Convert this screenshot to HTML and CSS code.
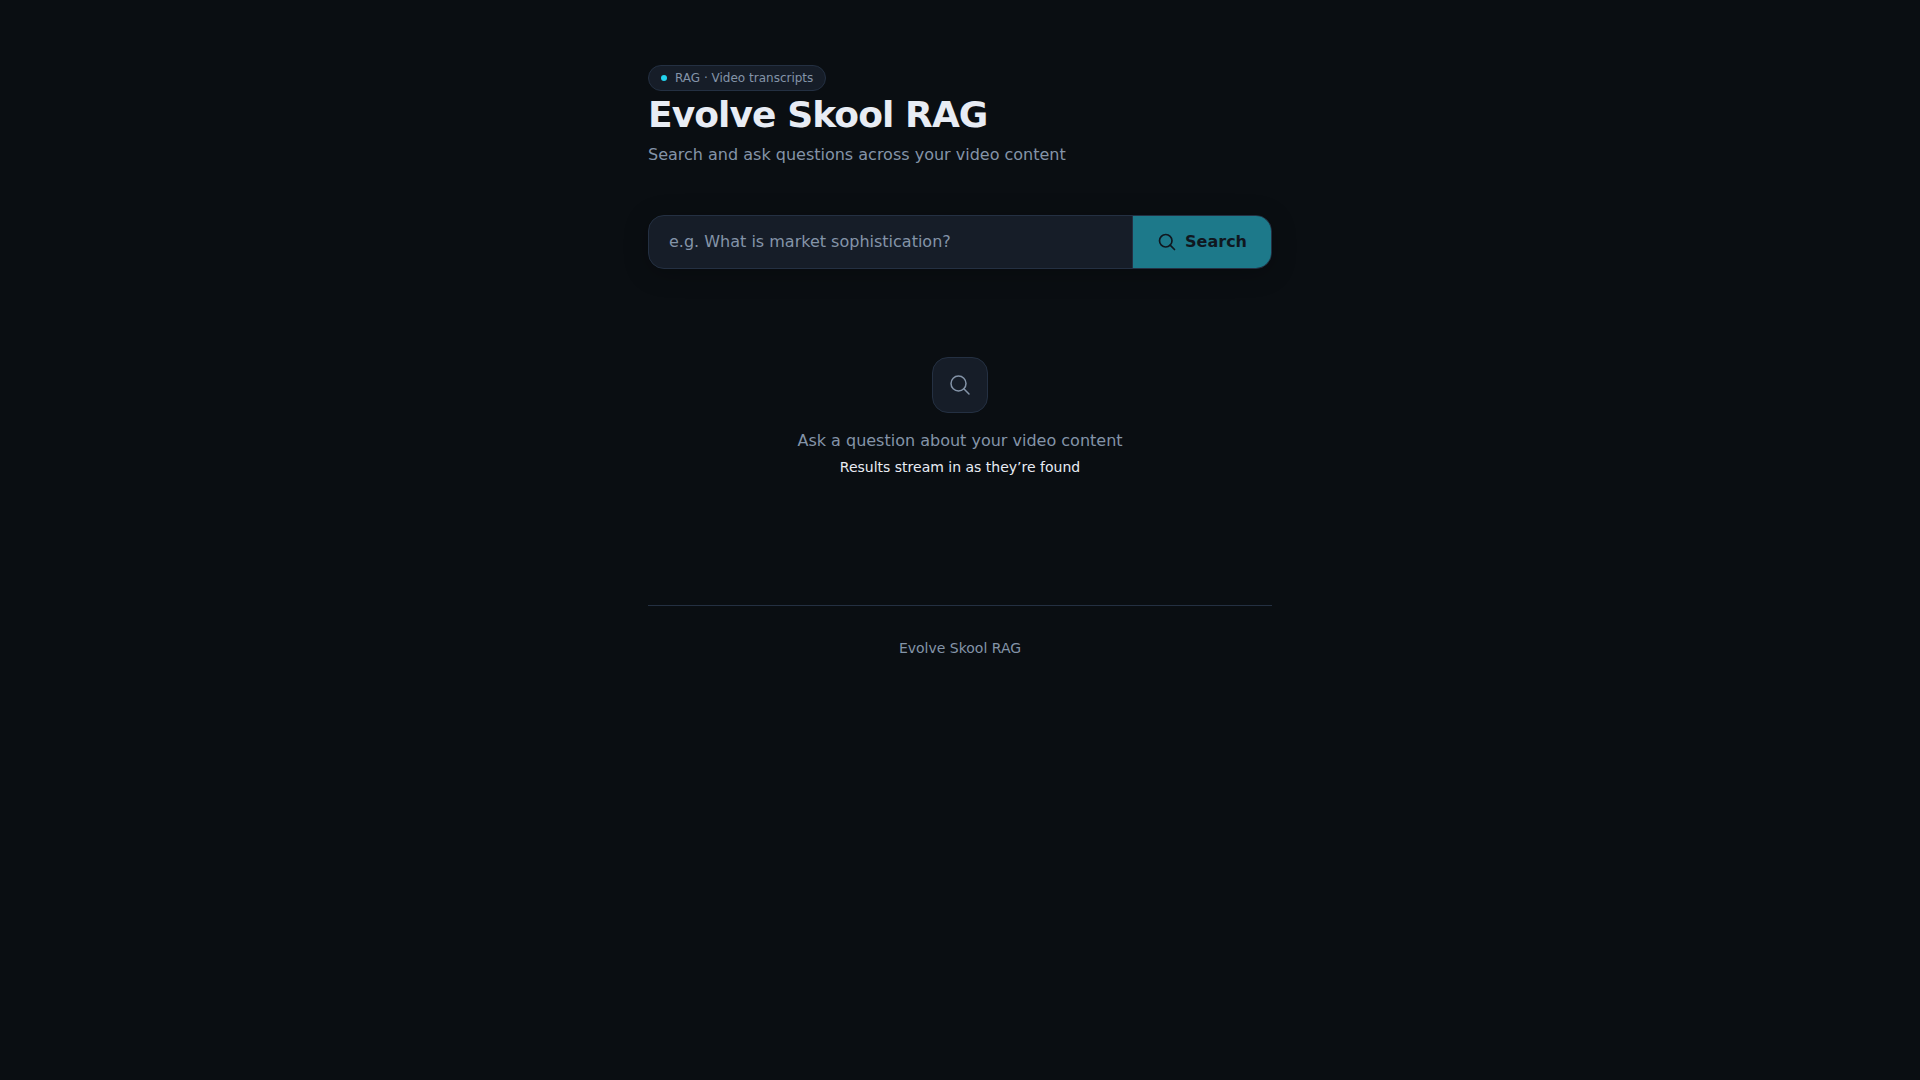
FILE: index.html
```html
<!DOCTYPE html>
<html lang="en">
<head>
    <meta charset="UTF-8">
    <meta name="viewport" content="width=device-width, initial-scale=1.0">
    <title>Evolve Skool RAG</title>
    <link rel="stylesheet" href="styles.css">
</head>
<body>
    <div class="container">
        <header class="header">
            <span class="badge"><span class="badge-dot"></span>RAG · Video transcripts</span>
            <h1>Evolve Skool RAG</h1>
            <p class="subtitle">Search and ask questions across your video content</p>
        </header>

        <main>
            <form class="search-form">
                <input type="text" id="query" class="search-input" aria-label="Question" placeholder="e.g. What is market sophistication?">
                <button type="submit" class="search-button" disabled>
                    <svg class="search-icon" viewBox="0 0 24 24" aria-hidden="true">
                        <circle cx="10.5" cy="10.5" r="7.5"/>
                        <path d="M21 21l-5.2-5.2"/>
                    </svg>
                    Search
                </button>
            </form>

            <section class="empty-state">
                <div class="empty-icon">
                    <svg viewBox="0 0 24 24" aria-hidden="true">
                        <circle cx="10.5" cy="10.5" r="7.5"/>
                        <path d="M21 21l-5.2-5.2"/>
                    </svg>
                </div>
                <p class="empty-title">Ask a question about your video content</p>
                <p class="empty-hint">Results stream in as they’re found</p>
            </section>
        </main>

        <footer class="footer">Evolve Skool RAG</footer>
    </div>
</body>
</html>
```

FILE: styles.css
```css
:root {
    --bg: #0a0e12;
    --surface: #161d28;
    --border: #243042;
    --text: #e8ecf4;
    --muted: #8494a8;
    --accent: #22d3ee;
}
* {
    box-sizing: border-box;
}
body {
    margin: 0;
    background-color: var(--bg);
    color: var(--text);
    font-family: "DejaVu Sans", sans-serif;
    font-size: 16px;
    line-height: 24px;
}
h1, p {
    margin: 0;
}
svg {
    fill: none;
    stroke: currentColor;
    stroke-width: 1.5;
    stroke-linecap: round;
    stroke-linejoin: round;
}
.container {
    max-width: 672px;
    margin: 0 auto;
    padding: 65px 24px;
}
.header {
    display: flex;
    flex-direction: column;
    align-items: flex-start;
    margin-bottom: 48px;
}
.badge {
    display: flex;
    align-items: center;
    gap: 8px;
    margin-bottom: 4px;
    padding: 4px 12px;
    border: 1px solid var(--border);
    border-radius: 999px;
    background-color: var(--surface);
    color: var(--muted);
    font-size: 12px;
    line-height: 16px;
}
.badge-dot {
    width: 6px;
    height: 6px;
    border-radius: 50%;
    background-color: var(--accent);
}
h1 {
    font-size: 36px;
    line-height: 40px;
    font-weight: 700;
    letter-spacing: -0.025em;
}
.subtitle {
    margin-top: 8px;
    color: var(--muted);
}
.search-form {
    display: flex;
    overflow: hidden;
    border: 1px solid var(--border);
    border-radius: 16px;
    background-color: var(--surface);
    box-shadow: 0 4px 24px rgba(0, 0, 0, 0.25);
}
.search-input {
    flex: 1;
    min-width: 0;
    padding: 14px 20px;
    border: none;
    outline: none;
    background: transparent;
    color: var(--text);
    font: inherit;
}
.search-input::placeholder {
    color: var(--muted);
    opacity: 1;
}
.search-button {
    display: flex;
    align-items: center;
    gap: 8px;
    padding: 0 24px;
    border: none;
    border-left: 1px solid var(--border);
    background-color: #1d798a;
    color: #10171f;
    font: inherit;
    font-weight: 600;
}
.search-icon {
    width: 20px;
    height: 20px;
    stroke-width: 2;
}
.empty-state {
    display: flex;
    flex-direction: column;
    align-items: center;
    padding: 88px 0 64px;
    text-align: center;
}
.empty-icon {
    display: flex;
    align-items: center;
    justify-content: center;
    width: 56px;
    height: 56px;
    margin-bottom: 16px;
    border: 1px solid var(--border);
    border-radius: 16px;
    background-color: var(--surface);
    color: var(--muted);
}
.empty-icon svg {
    width: 24px;
    height: 24px;
}
.empty-title {
    color: var(--muted);
}
.empty-hint {
    margin-top: 4px;
    font-size: 14px;
    line-height: 20px;
}
.footer {
    margin-top: 64px;
    padding-top: 32px;
    border-top: 1px solid var(--border);
    color: var(--muted);
    font-size: 14px;
    line-height: 20px;
    text-align: center;
}
```
